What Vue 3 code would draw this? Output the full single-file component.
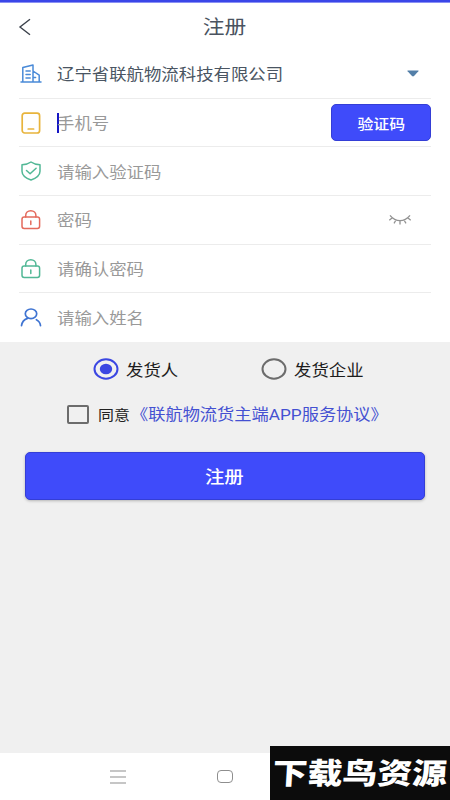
<script setup>
import { ref } from 'vue'

const fields = [
  { key: 'company', icon: 'building', text: '辽宁省联航物流科技有限公司', filled: true },
  { key: 'phone', icon: 'phone', text: '手机号' },
  { key: 'code', icon: 'shield', text: '请输入验证码' },
  { key: 'password', icon: 'lock', text: '密码' },
  { key: 'confirm', icon: 'lock', text: '请确认密码' },
  { key: 'name', icon: 'user', text: '请输入姓名' },
]
const roles = ['发货人', '发货企业']
const role = ref('发货人')
</script>

<template>
  <div class="screen">
    <div class="status"></div>
    <header class="header">
      <svg class="back" viewBox="0 0 14 18"><path d="M12 1.2 2 9l10 7.8" /></svg>
      <h1><span class="wide center">注册</span></h1>
    </header>

    <main class="form">
      <div v-for="f in fields" :key="f.key" class="row">
        <svg class="icon" :class="f.key" viewBox="0 0 22 22">
          <g v-if="f.icon === 'building'">
            <path d="M1 19h20M2.8 19V4.600L13 2v17M13 8l6.200 4.200V19M6 8h4.200M6 11.500h4.200M6 15h4.200M13 14.500h2.600" />
          </g>
          <g v-else-if="f.icon === 'phone'">
            <rect x="2.2" y="1.2" width="17.4" height="19.8" rx="2.5" />
            <path d="M8.2 17h5.4" />
          </g>
          <g v-else-if="f.icon === 'shield'">
            <path d="M11 2c2.4 1.8 5 2.6 9 2.8v6.4c0 4.500-4 7-9 8.800-5-1.800-9-4.300-9-8.800V4.800C6 4.600 8.600 3.800 11 2Z" />
            <path d="m6.500 10.500 3.600 3.300 6-5.600" />
          </g>
          <g v-else-if="f.icon === 'lock'">
            <rect x="2" y="8" width="17.600" height="11.400" rx="2.200" />
            <path d="M5.700 8V6.600c0-2.900 2.100-4.900 5.100-4.900s5.100 2 5.100 4.900V8M10.800 12v3.400" />
          </g>
          <g v-else>
            <ellipse cx="11" cy="6.800" rx="5.700" ry="4.800" />
            <path d="M1.500 18.700c.4-3.500 2.500-6 6-7.300M20.500 18.700c-.3-3-1.600-4.800-4.100-6" />
          </g>
        </svg>
        <i v-if="f.key === 'phone'" class="caret"></i>
        <span class="wide label" :class="{ filled: f.filled }">{{ f.text }}</span>
        <svg v-if="f.key === 'company'" class="arrow" viewBox="0 0 12 7"><path d="M.8.500h10.400q.8 0 .2.700L7 6q-1 .8-2 0L.600 1.200Q0 .500.800.500Z" /></svg>
        <button v-if="f.key === 'phone'" class="send"><span class="wide center">验证码</span></button>
        <svg v-if="f.key === 'password'" class="eye" viewBox="0 0 24 12">
          <path d="M2 1.300C5 5 8 6.700 12 6.700s7-1.700 10-5.400M4.300 3.700 1.300 6.200M8 6 6 9.400M12 6.700v3.900M16 6l2 3.400M19.700 3.700l3 2.500" />
        </svg>
      </div>
    </main>

    <section class="options">
      <div class="roles">
        <label v-for="r in roles" :key="r" class="role" @click="role = r">
          <svg class="radio" :class="{ on: role === r }" viewBox="0 0 26 22">
            <ellipse class="ring" cx="13" cy="11" rx="11.500" ry="9.700" />
            <ellipse v-if="role === r" class="dot" cx="13" cy="11" rx="6.200" ry="5.200" />
          </svg>
          <span class="wide">{{ r }}</span>
        </label>
      </div>
      <div class="agree">
        <i class="box"></i>
        <span class="wide agree-text">同意</span>
        <a class="wide link">《联航物流货主端APP服务协议》</a>
      </div>
      <button class="submit"><span class="wide center">注册</span></button>
    </section>

    <footer class="nav">
      <svg class="menu" viewBox="0 0 16 14"><path d="M0 1h16M0 7h16M0 13h16" /></svg>
      <i class="home"></i>
      <div class="brand"><span>下载鸟资源</span></div>
    </footer>
  </div>
</template>

<style>
body { background: #fff; }
</style>

<style scoped>
.screen {
  width: 450px;
  height: 800px;
  display: flex;
  flex-direction: column;
  overflow: hidden;
  background: #fff;
  font-family: Roboto, "Noto Sans CJK SC", sans-serif;
}
.wide {
  display: inline-block;
  white-space: nowrap;
  transform: scaleX(1.122);
  transform-origin: left center;
}
.wide.center { transform-origin: center; }
svg { display: block; flex: none; fill: none; }
.status { height: 3px; flex: none; background: linear-gradient(#3a46e8 2px, #8a90f4 2px); }
.header {
  height: 47px;
  flex: none;
  display: grid;
  grid-template-columns: 50px 1fr 50px;
  align-items: center;
}
.back { width: 14px; height: 18px; margin-left: 18px; stroke: #3c424c; stroke-width: 1.4; }
h1 { margin: 2px 1px 0 0; font-size: 19.400px; line-height: 28px; font-weight: 400; color: #4a535f; text-align: center; }
.form { flex: none; padding: 0 19px; }
.row {
  height: 48.700px;
  box-sizing: border-box;
  display: flex;
  align-items: center;
  border-bottom: 1px solid #ececec;
}
.row:last-child { border-bottom: 0; }
.icon {
  width: 22px;
  height: 22px;
  margin: 0 15px 0 1px;
  stroke: currentColor;
  stroke-width: 1.5;
  stroke-linecap: round;
  stroke-linejoin: round;
}
.company { color: #4a8ad8; }
.phone { color: #e8b43c; stroke-width: 1.7; }
.code, .confirm { color: #52b896; }
.password { color: #e46a5c; }
.name { color: #3f74d2; stroke-width: 1.7; }
.label { flex: none; padding-top: 3px; font-size: 15.500px; line-height: 24px; color: #999; }
.label.filled { color: #4a5562; }
.caret { width: 2px; height: 20px; margin: 0 -2px 0 0; background: #1616c4; }
.arrow { width: 12px; height: 7px; margin: -1px 12px 0 auto; fill: #537fa8; }
.send {
  width: 100px;
  height: 37px;
  margin: 0 0 0 auto;
  padding: 3px 0 0 1px;
  border: 1px solid #343ed6;
  border-radius: 5px;
  background: #3f4bfa;
  color: #fff;
  font: 500 14.200px/20px Roboto, "Noto Sans CJK SC", sans-serif;
}
.eye { width: 24px; height: 12px; margin: 0 19px 0 auto; stroke: #929292; stroke-width: 1.3; }
.options { flex: 1; background: #f0f0f0; padding: 0 25px; }
.roles { display: grid; grid-template-columns: 168px 1fr; padding: 15px 0 0 68px; }
.role { height: 24px; display: flex; align-items: center; gap: 7px; font-size: 15.500px; color: #1c1c1c; }
.radio { width: 26px; height: 22px; }
.ring { stroke: #6c6c6c; stroke-width: 2; }
.on .ring { stroke: #3b47e2; }
.dot { fill: #3b47e2; }
.agree { height: 24px; margin-top: 21px; padding-left: 42px; display: flex; align-items: center; }
.box { width: 22px; height: 19px; box-sizing: border-box; border: 2px solid #6c6c6c; border-radius: 2px; }
.agree-text { margin-left: 9px; padding-bottom: 1px; font-size: 14.200px; color: #222; }
.link { margin-left: 5px; padding-bottom: 2px; font-size: 15.350px; color: #4450d2; }
.submit {
  display: block;
  width: 400px;
  height: 48px;
  margin: 26px 0 0;
  padding: 1px 1px 0 0;
  border: 1px solid #343ed6;
  border-radius: 5px;
  background: #3f4bfa;
  box-shadow: 0 1px 3px rgba(0, 0, 0, 0.25);
  color: #fff;
  font: 500 17.300px/24px Roboto, "Noto Sans CJK SC", sans-serif;
}
.nav { height: 47px; flex: none; display: flex; align-items: center; background: #fff; }
.menu { width: 16px; height: 14px; margin-left: 110px; stroke: #8e8e8e; stroke-width: 1.2; }
.home { width: 16px; height: 13px; box-sizing: border-box; margin-left: 91px; border: 1.500px solid #8e8e8e; border-radius: 4px; }
.brand {
  width: 180px;
  height: 54px;
  flex: none;
  align-self: flex-end;
  margin-left: auto;
  background: #0c0c0c;
  color: #fff;
  display: flex;
  align-items: center;
  justify-content: center;
}
.brand span {
  font: 900 32px/50px "Noto Sans CJK SC", sans-serif;
  white-space: nowrap;
  transform: translateY(-2px) scale(1.090, 0.920) skewX(-3deg);
}
</style>
